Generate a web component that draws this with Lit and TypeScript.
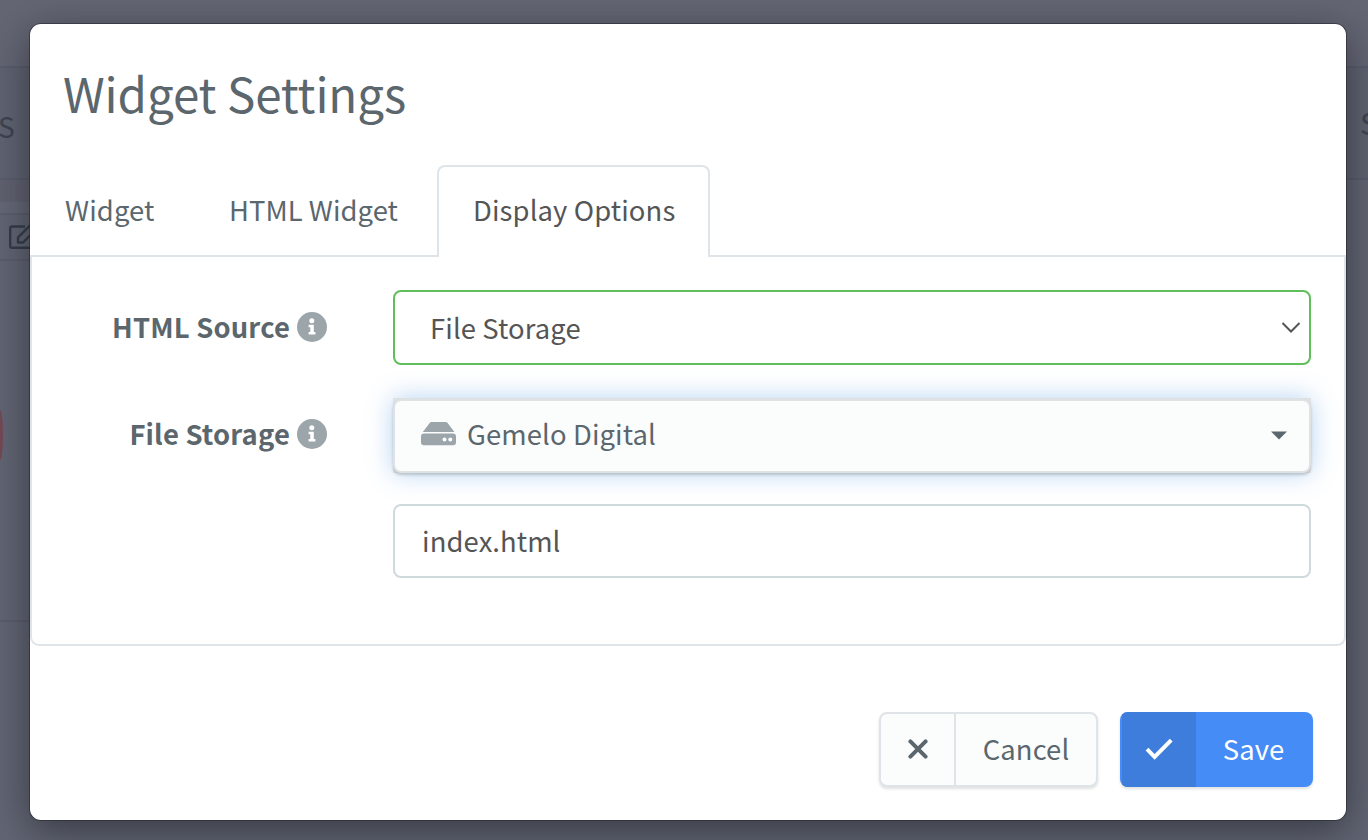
import { LitElement, html, css } from "lit";
import { customElement, property } from "lit/decorators.js";

const infoIcon = html`<svg class="info" viewBox="0 0 30 30" width="30" height="30">
  <circle cx="15" cy="15" r="15" fill="#9ba5aa" />
  <circle cx="14.8" cy="8.8" r="2.5" fill="#fff" />
  <path d="M11.6 12.7h5.2v7.4h1.6v2.5h-6.8v-2.5h1.7v-4.9h-1.7z" fill="#fff" />
</svg>`;

@customElement("page-backdrop")
export class PageBackdrop extends LitElement {
  static styles = css`
    :host {
      display: flex;
      flex-direction: column;
      height: 840px;
      overflow: hidden;
      background: #626573;
      color: #3f4451;
      font: 28px/40px "Noto Sans CJK SC", "Noto Sans", sans-serif;
    }
    .top { height: 66px; border-bottom: 2px solid #5b5e6d; background: #646674; }
    .heads {
      display: flex;
      justify-content: space-between;
      align-items: center;
      height: 110px;
      background: #606371;
      border-bottom: 2px solid #5a5d6b;
    }
    .left { margin-left: -2px; padding-top: 5px; }
    .right { margin-right: -10px; font-size: 30px; padding-bottom: 2px; }
    .gap, .strip, .tools, .body { width: 700px; }
    .gap { height: 22px; background: #606270; }
    .strip { height: 11px; background: #656876; border-bottom: 2px solid #5c5f6d; }
    .tools { height: 44px; display: flex; align-items: center; padding-left: 9px; border-bottom: 2px solid #5b5e6c; }
    .body { height: 359px; display: flex; align-items: center; border-bottom: 2px solid #5b5e6c; }
    .dial { width: 3px; height: 50px; border-radius: 0 3px 3px 0 / 0 25px 25px 0; background: #744955; margin-bottom: 12px; }
  `;
  render() {
    return html`
      <div class="top"></div>
      <div class="heads"><span class="left">S</span><span class="right">S</span></div>
      <div class="gap"></div>
      <div class="strip"></div>
      <div class="tools">
        <svg width="30" height="26" viewBox="0 0 30 26" fill="none" stroke="#363c4b" stroke-width="2.4" stroke-linejoin="round">
          <path d="M16 2.5H3a1.8 1.8 0 0 0-1.8 1.8v17.6A1.8 1.8 0 0 0 3 23.7h18a2 2 0 0 0 2-2v-5" />
          <path d="M9 18.5v-5L21 1.5l5 5-12 12z" />
        </svg>
      </div>
      <div class="body"><div class="dial"></div></div>
    `;
  }
}

@customElement("field-row")
export class FieldRow extends LitElement {
  @property() label = "";
  static styles = css`
    :host { display: grid; grid-template-columns: 295px 918px; column-gap: 66px; align-items: start; }
    .label {
      display: flex;
      justify-content: flex-end;
      align-items: center;
      gap: 7px;
      height: var(--label-height, 72px);
      font-weight: 700;
      font-size: 27.4px;
      color: #5b666d;
      letter-spacing: 0.17px;
      white-space: nowrap;
    }
    .text { line-height: 40px; }
    .info { display: block; flex: none; margin-top: 1px; }
  `;
  render() {
    return html`
      <div class="label">${this.label ? html`<span class="text">${this.label}</span>${infoIcon}` : ""}</div>
      <slot></slot>
    `;
  }
}

@customElement("app-root")
export class AppRoot extends LitElement {
  static styles = css`
    * { box-sizing: border-box; }
    :host {
      display: grid;
      width: 1368px;
      height: 840px;
      overflow: hidden;
      font-family: "Noto Sans CJK SC", "Noto Sans", sans-serif;
      font-size: 27.4px;
      line-height: 40px;
      letter-spacing: 0.12px;
      color: #5b666d;
    }
    page-backdrop, .modal { grid-area: 1 / 1; }
    .modal {
      position: relative;
      margin: 24px 22px 20px 30px;
      display: flex;
      flex-direction: column;
      background: #fff;
      border-radius: 11px;
      box-shadow: 0 0 0 1px rgba(30, 32, 42, 0.5), 0 10px 40px rgba(10, 14, 18, 0.5);
    }
    .title {
      margin: 0;
      height: 141px;
      padding: 34px 33px 0;
      font-weight: 400;
      font-size: 47.5px;
      line-height: 70px;
      letter-spacing: -0.1px;
    }
    .tabs { display: flex; height: 92px; }
    .tab { padding: 24px 0 0 35px; border-bottom: 2px solid #dee4e7; white-space: nowrap; }
    .first { width: 164px; }
    .second { width: 243px; letter-spacing: 0.05px; }
    .active {
      width: 273px;
      color: #555;
      padding: 22px 0 0 34px;
      border: 2px solid #dee4e7;
      border-bottom: 0;
      border-radius: 8px 8px 0 0;
    }
    .rest { flex: 1; border-bottom: 2px solid #dee4e7; }
    .panel {
      display: flex;
      flex-direction: column;
      height: 389px;
      padding: 33px 0 0;
      border: 2px solid #dee4e7;
      border-top: 0;
      border-radius: 0 0 9px 9px;
    }
    .field { display: flex; align-items: center; border-radius: 8px; }
    .select { height: 75px; border: 2px solid #5fbf5a; padding: 0 8px 1px 35px; color: #555; }
    .chevron { margin-top: 1px; }
    .drop-base {
      background: #dfe1e2;
      padding-top: 1px;
      box-shadow: 0 0 24px rgba(80, 150, 225, 0.42);
    }
    .drop {
      height: 74px;
      border: 2px solid #dde2e5;
      background: #fbfdfd;
      padding: 0 22px 7px 26px;
      box-shadow: 0 2px 3px rgba(0, 0, 0, 0.18);
    }
    .shift { margin-top: 33px; --label-height: 70px; }
    .third { margin-top: 31px; }
    .input { height: 74px; border: 2px solid #cfdadd; padding: 0 26px 3px 27px; color: #555; }
    .grow { flex: 1; }
    .drive { margin: 2px 11px 0 0; flex: none; }
    .caret { margin-top: 5px; }
    .footer { display: flex; justify-content: flex-end; padding: 66px 33px 0 0; gap: 22px; }
    .button {
      display: flex;
      height: 75px;
      border-radius: 8px;
      overflow: hidden;
      box-shadow: 0 2px 3px rgba(0, 0, 0, 0.12);
    }
    .cell { display: flex; align-items: center; justify-content: center; padding-bottom: 3px; }
    .cancel { width: 219px; border: 2px solid #dee4e7; background: #fbfdfd; }
    .icon { padding-bottom: 1px; }
    .cancel .icon { width: 75px; border-right: 2px solid #dee4e7; }
    .name { flex: 1; }
    .save { width: 193px; background: #468cf7; color: #fff; padding-left: 2px; }
    .save .icon { width: 74px; background: #3f7ddc; }
    .save .name { padding-right: 2px; }
  `;
  render() {
    return html`
      <page-backdrop></page-backdrop>
      <section class="modal">
        <h1 class="title">Widget Settings</h1>
        <nav class="tabs">
          <div class="tab first">Widget</div>
          <div class="tab second">HTML Widget</div>
          <div class="tab active">Display Options</div>
          <div class="rest"></div>
        </nav>
        <div class="panel">
          <field-row label="HTML Source">
            <div class="field select">
              <span class="grow">File Storage</span>
              <svg class="chevron" width="20" height="12" viewBox="0 0 20 12" fill="none" stroke="#555" stroke-width="2">
                <path d="M1.5 1L10 9.5l8.5-8.5" />
              </svg>
            </div>
          </field-row>
          <field-row class="shift" label="File Storage">
            <div class="drop-base">
              <div class="field drop">
                <svg class="drive" width="35" height="24" viewBox="0 0 35 24">
                  <path d="M8.5 1.2Q9.2 0 10.5 0h14.3q1.3 0 2 1.2L33.4 10H1.8z" fill="#9ba5aa" />
                  <rect y="11.5" width="35" height="11.8" rx="3" fill="#9ba5aa" />
                  <circle cx="23.5" cy="17.5" r="2" fill="#fff" />
                  <circle cx="29.3" cy="17.5" r="2" fill="#fff" />
                </svg>
                <span class="grow">Gemelo Digital</span>
                <svg class="caret" width="16" height="9" viewBox="0 0 16 9"><path d="M0 .5h16L8 8.5z" fill="#5b666d" /></svg>
              </div>
            </div>
          </field-row>
          <field-row class="third">
            <div class="field input">index.html</div>
          </field-row>
        </div>
        <footer class="footer">
          <div class="button cancel">
            <span class="cell icon">
              <svg width="20" height="20" viewBox="0 0 20 20" stroke="#5b666d" stroke-width="4" stroke-linecap="round">
                <path d="M2.4 2.4l15.2 15.2M17.6 2.4L2.4 17.6" />
              </svg>
            </span>
            <span class="cell name">Cancel</span>
          </div>
          <div class="button save">
            <span class="cell icon">
              <svg width="28" height="22" viewBox="0 0 28 22" fill="none" stroke="#fff" stroke-width="4">
                <path d="M2 11.2l7.6 7.6L26.2 2.2" />
              </svg>
            </span>
            <span class="cell name">Save</span>
          </div>
        </footer>
      </section>
    `;
  }
}
